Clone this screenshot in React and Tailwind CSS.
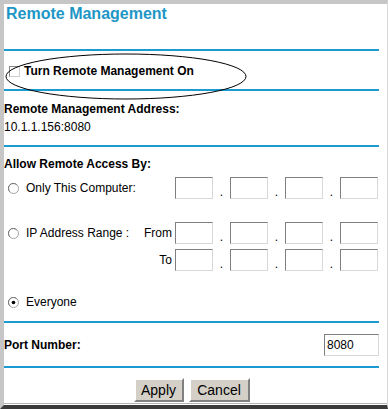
import React from "react";

const Line = () => <div className="h-[2px] w-[375px] bg-[#1b9bd1]" />;

const Radio = ({ checked }) => (
  <svg width="11" height="11" viewBox="0 0 12 12" className="block">
    <circle cx="6" cy="6" r="5.5" fill="#fff" stroke="#9a9a9a" />
    <path d="M2 9.5 A5 5 0 0 1 9.5 2" fill="none" stroke="#6e6e6e" strokeWidth="1" />
    {checked && <circle cx="6" cy="6" r="2" fill="#000" />}
  </svg>
);

const Box = ({ w = "w-[38px]", children }) => (
  <div
    className={`${w} h-[22px] bg-white border border-[#7f7f7f] border-r-[#d8d8d8] border-b-[#d8d8d8] flex items-center pl-[2px] text-[12px]`}
  >
    {children}
  </div>
);

const IpBoxes = () => (
  <div className="flex items-end">
    {[0, 1, 2, 3].map((i) => (
      <React.Fragment key={i}>
        <Box />
        {i < 3 && <span className="w-[17px] text-center leading-[14px]">.</span>}
      </React.Fragment>
    ))}
  </div>
);

export default function App() {
  return (
    <div className="relative w-[388px] h-[409px] bg-white border-t-4 border-l-4 border-[#c6c6c6] border-r border-r-[#d8d8d8] border-b-4 border-b-[#3a3a3a] text-black text-[12px] font-['Liberation_Sans',Arial,sans-serif]">
      {/* Title */}
      <div className="h-[45px] pl-[2px] pt-[1px]">
        <h1 className="text-[16px] leading-[18px] font-bold text-[#1d96c6]">Remote Management</h1>
      </div>
      <Line />

      {/* Turn on */}
      <div className="h-[38px] flex items-center pl-[5px] gap-[4px] pt-[2px]">
        <div className="w-[11px] h-[11px] border border-[#8a8a8a] border-r-[#cfcfcf] border-b-[#cfcfcf] bg-white" />
        <span className="font-bold leading-[14px]">Turn Remote Management On</span>
      </div>
      <Line />

      {/* Address */}
      <div className="h-[54px] pt-[11px] flex flex-col gap-[4px]">
        <span className="font-bold leading-[14px]">Remote Management Address:</span>
        <span className="leading-[14px]">10.1.1.156:8080</span>
      </div>
      <Line />

      {/* Allow access */}
      <div className="h-[174px] flex flex-col">
        <div className="pt-[10px] leading-[14px] font-bold">Allow Remote Access By:</div>

        <div className="mt-[6px] flex items-center">
          <div className="w-[22px] pl-[4px]">
            <Radio />
          </div>
          <span className="w-[149px] leading-[14px]">Only This Computer:</span>
          <IpBoxes />
        </div>

        <div className="mt-[23px] flex items-center">
          <div className="w-[22px] pl-[4px]">
            <Radio />
          </div>
          <div className="w-[149px] flex justify-between pr-[3px] leading-[14px]">
            <span>IP Address Range :</span>
            <span>From</span>
          </div>
          <IpBoxes />
        </div>

        <div className="mt-[5px] flex items-center">
          <div className="w-[171px] text-right pr-[3px] leading-[14px]">To</div>
          <IpBoxes />
        </div>

        <div className="mt-[24px] flex items-center h-[14px]">
          <div className="w-[22px] pl-[4px]">
            <Radio checked />
          </div>
          <span className="leading-[14px]">Everyone</span>
        </div>
      </div>
      <Line />

      {/* Port */}
      <div className="h-[43px] w-[375px] flex items-center justify-between pt-[1px]">
        <span className="font-bold leading-[14px]">Port Number:</span>
        <Box w="w-[55px]">8080</Box>
      </div>
      <Line />

      {/* Buttons */}
      <div className="h-[35px] w-[375px] flex justify-center gap-[5px] pt-[10px]">
        <button className="w-[50px] h-[24px] bg-[#d4d0c8] border-2 border-t-white border-l-white border-r-[#808080] border-b-[#808080] text-[14px] leading-none text-black">
          Apply
        </button>
        <button className="w-[61px] h-[24px] bg-[#d4d0c8] border-2 border-t-white border-l-white border-r-[#808080] border-b-[#808080] text-[14px] leading-none text-black">
          Cancel
        </button>
      </div>
      <div className="h-[1px] bg-[#b4b4b4]" />

      {/* Hand-drawn ellipse around the checkbox */}
      <svg
        className="absolute left-0 top-[49px] pointer-events-none"
        width="246"
        height="48"
        viewBox="0 0 246 48"
      >
        <ellipse cx="122" cy="23.5" rx="120" ry="22.5" fill="none" stroke="#000" strokeWidth="1" />
      </svg>
    </div>
  );
}
